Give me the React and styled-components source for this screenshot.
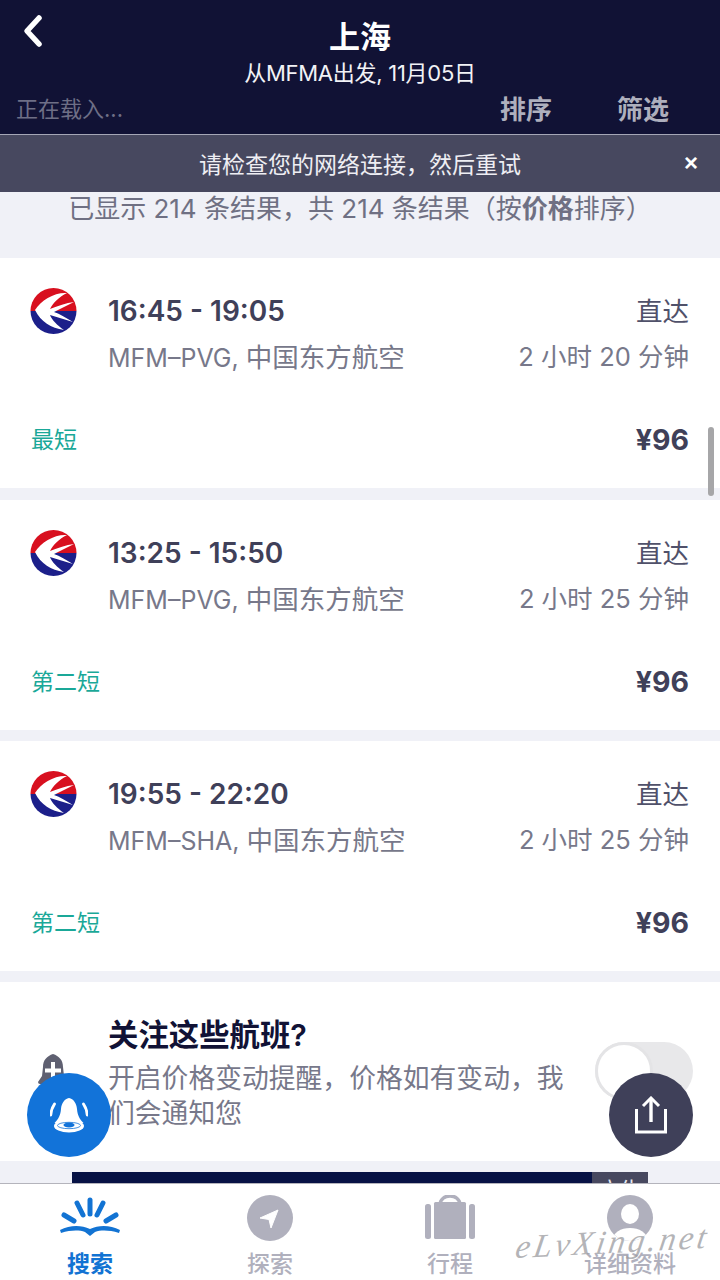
import React from "react";
import styled, { createGlobalStyle } from "styled-components";

const FONT = `Inter, "Noto Sans CJK SC", "Noto Sans", sans-serif`;

const Global = createGlobalStyle`
  html, body { margin: 0; padding: 0; background: #f0f1f7; }
  * { box-sizing: border-box; }
`;

const Page = styled.div`
  position: relative;
  width: 720px;
  height: 1280px;
  overflow: hidden;
  display: flex;
  flex-direction: column;
  font-family: ${FONT};
  background: #f0f1f7;
`;

const Header = styled.header`
  height: 135px;
  flex: none;
  background: #111235;
  border-bottom: 1px solid #a5a6b6;
  display: flex;
  flex-direction: column;
  align-items: center;
  position: relative;
`;

const Back = styled.button`
  position: absolute;
  left: 20px;
  top: 13px;
  width: 28px;
  height: 36px;
  padding: 0;
  border: 0;
  background: none;
  display: flex;
`;

const Title = styled.div`
  margin-top: 17px;
  height: 40px;
  line-height: 40px;
  font-size: 31px;
  font-weight: 600;
  color: #fff;
`;

const Subtitle = styled.div`
  height: 32px;
  line-height: 32px;
  font-size: 22px;
  color: #f2f2f6;
  letter-spacing: -0.27px;
`;

const Controls = styled.div`
  width: 100%;
  height: 40px;
  margin-top: -2px;
  padding: 0 51px 0 16px;
  display: flex;
  align-items: center;
`;

const Loading = styled.div`
  flex: 1;
  font-size: 22px;
  color: #6e6f86;
`;

const ControlAction = styled.div`
  font-size: 26px;
  font-weight: 600;
  color: #aeafbd;
  margin-left: 65px;
`;

const Banner = styled.div`
  height: 57px;
  flex: none;
  background: #47485f;
  display: flex;
  align-items: center;
  justify-content: center;
  position: relative;
  font-size: 23px;
  color: #eeeef3;
  padding-bottom: 2px;
`;

const Close = styled.span`
  position: absolute;
  right: 22px;
  top: 14px;
  font-size: 24px;
  font-weight: 700;
  color: #fff;
  font-family: "Liberation Sans", sans-serif;
`;

const Content = styled.main`
  flex: 1;
  min-height: 0;
  overflow: hidden;
  display: flex;
  flex-direction: column;
`;

const Summary = styled.div`
  height: 66px;
  flex: none;
  padding-top: 1px;
  line-height: 32px;
  text-align: center;
  font-size: 26px;
  color: #6f7083;
  b { font-weight: 700; }
`;

const Card = styled.article`
  flex: none;
  height: 230px;
  margin-bottom: ${(p) => p.$gap}px;
  background: #fff;
  padding: 30px 31px 0 30px;
  display: grid;
  grid-template-columns: 78px 1fr auto;
  grid-template-rows: 46px 46px 1fr;
`;

const LogoCell = styled.div`
  grid-row: 1 / span 2;
`;

const Time = styled.div`
  font-size: 28px;
  font-weight: 600;
  line-height: 46px;
  color: #3f4059;
`;

const Stops = styled.div`
  font-size: 26.5px;
  line-height: 46px;
  color: #50516a;
  text-align: right;
`;

const Route = styled.div`
  font-size: 25px;
  line-height: 46px;
  color: #77788a;
  white-space: nowrap;
`;

const Carrier = styled.span`
  font-size: 26.5px;
`;

const Duration = styled.div`
  font-size: 25.5px;
  line-height: 46px;
  color: #77788a;
  text-align: right;
  white-space: nowrap;
`;

const CardFoot = styled.div`
  grid-column: 1 / -1;
  display: flex;
  justify-content: space-between;
  align-items: center;
  height: 46px;
  margin-top: 35px;
  padding-left: 1px;
`;

const Tag = styled.div`
  font-size: 23px;
  color: #1aa898;
`;

const Price = styled.div`
  font-size: 28.5px;
  font-weight: 700;
  color: #3f4059;
  margin-top: 3px;
`;

const WatchCard = styled.section`
  flex: none;
  height: 179px;
  margin-bottom: 11px;
  background: #fff;
  padding: 32px 27px 0 38px;
  display: grid;
  grid-template-columns: 70px 1fr auto;
`;

const WatchIcon = styled.div`
  padding-top: 40px;
`;

const WatchText = styled.div`
  width: 470px;
`;

const WatchTitle = styled.div`
  font-size: 30.4px;
  font-weight: 600;
  line-height: 42px;
  color: #111235;
  white-space: nowrap;
`;

const WatchBody = styled.div`
  font-size: 26.8px;
  line-height: 35px;
  color: #77788a;
  margin-top: 5px;
`;

const Toggle = styled.div`
  width: 98px;
  height: 58px;
  margin-top: 28px;
  border-radius: 29px;
  background: #e8e8ea;
  position: relative;
`;

const Knob = styled.div`
  position: absolute;
  left: 0;
  top: 0;
  width: 58px;
  height: 58px;
  border-radius: 50%;
  background: #fff;
  border: 3px solid #e4e4e6;
`;

const AdRow = styled.div`
  flex: none;
  width: 576px;
  height: 80px;
  margin-left: 72px;
  background: #071245;
  display: flex;
  justify-content: flex-end;
`;

const AdBadge = styled.div`
  width: 56px;
  height: 40px;
  background: #47485f;
  color: #e8e8ee;
  font-size: 22px;
  line-height: 36px;
  text-align: center;
`;

const TabBar = styled.nav`
  height: 97px;
  flex: none;
  position: relative;
  z-index: 2;
  background: #fff;
  border-top: 1px solid #b4b4bc;
  display: grid;
  grid-template-columns: repeat(4, 180px);
`;

const Tab = styled.div`
  display: flex;
  flex-direction: column;
  align-items: center;
  color: ${(p) => (p.$active ? "#1273d3" : "#b0b0bd")};
  padding-top: 11px;
`;

const TabIcon = styled.div`
  height: 52px;
  display: flex;
  align-items: flex-start;
  justify-content: center;
`;

const TabLabel = styled.div`
  font-size: 23px;
  font-weight: ${(p) => (p.$active ? 700 : 500)};
  line-height: 32px;
  margin-top: 1px;
`;

const Fab = styled.button`
  position: absolute;
  top: 1073px;
  ${(p) => (p.$side === "left" ? "left: 27px;" : "left: 609px;")}
  z-index: 3;
  width: 84px;
  height: 84px;
  padding: 0;
  border: 0;
  border-radius: 50%;
  background: ${(p) => (p.$side === "left" ? "#1273d9" : "#3f4059")};
  display: flex;
  align-items: center;
  justify-content: center;
`;

const ScrollThumb = styled.div`
  position: absolute;
  left: 708px;
  top: 427px;
  width: 6px;
  height: 69px;
  border-radius: 3px;
  background: #a6a6a8;
  z-index: 3;
`;

const Watermark = styled.div`
  position: absolute;
  left: 516px;
  top: 1229px;
  z-index: 4;
  font-family: "Liberation Serif", serif;
  font-style: italic;
  font-size: 33px;
  letter-spacing: 3.2px;
  color: rgba(155, 155, 160, 0.75);
  transform: rotate(-3deg) skewX(-12deg);
  transform-origin: left center;
`;

const ChinaEastern = () => (
  <svg width="47" height="46" viewBox="0 0 47 46">
    <defs>
      <clipPath id="ce-c"><circle cx="23.5" cy="23" r="23" /></clipPath>
    </defs>
    <g clipPath="url(#ce-c)">
      <rect width="47" height="23" fill="#d8101f" />
      <rect y="23" width="47" height="23" fill="#1c1f8a" />
      <path d="M37 5 C25 4 11 12 5 22 C11 34 21 40 34 42 C27 37 22 32 20 27 L43 34 C36 30 30 26 24 24 L44 14 C36 15 28 18 20 21 C23 15 29 9 37 5 Z" fill="#fff" />
    </g>
  </svg>
);

const flights = [
  { time: "16:45 - 19:05", code: "MFM–PVG, ", dur: "2 小时 20 分钟", tag: "最短", gap: 12 },
  { time: "13:25 - 15:50", code: "MFM–PVG, ", dur: "2 小时 25 分钟", tag: "第二短", gap: 11 },
  { time: "19:55 - 22:20", code: "MFM–SHA, ", dur: "2 小时 25 分钟", tag: "第二短", gap: 11 },
];

export default function App() {
  return (
    <Page>
      <Global />
      <Header>
        <Back aria-label="返回">
          <svg width="26" height="36" viewBox="0 0 26 36">
            <path d="M19 5 L7 18 L19 31" fill="none" stroke="#fff" strokeWidth="5.5" strokeLinecap="round" strokeLinejoin="round" />
          </svg>
        </Back>
        <Title>上海</Title>
        <Subtitle>从MFMA出发, 11月05日</Subtitle>
        <Controls>
          <Loading>正在载入...</Loading>
          <ControlAction>排序</ControlAction>
          <ControlAction>筛选</ControlAction>
        </Controls>
      </Header>
      <Banner>
        请检查您的网络连接，然后重试
        <Close>×</Close>
      </Banner>
      <Content>
        <Summary>已显示 214 条结果，共 214 条结果（按<b>价格</b>排序）</Summary>
        {flights.map((f) => (
          <Card key={f.time} $gap={f.gap}>
            <LogoCell><ChinaEastern /></LogoCell>
            <Time>{f.time}</Time>
            <Stops>直达</Stops>
            <Route>{f.code}<Carrier>中国东方航空</Carrier></Route>
            <Duration>{f.dur}</Duration>
            <CardFoot>
              <Tag>{f.tag}</Tag>
              <Price>¥96</Price>
            </CardFoot>
          </Card>
        ))}
        <WatchCard>
          <WatchIcon>
            <svg width="30" height="34" viewBox="0 0 30 34">
              <path d="M15 0 C9 2 5 6 5 13 L4 22 L0 28 Q0 30 2 30 H28 Q30 30 30 28 L26 22 L25 13 C25 6 21 2 15 0 Z" fill="#5f6071" />
              <path d="M15 8 V25 M7 16.5 H23" stroke="#fff" strokeWidth="4" />
            </svg>
          </WatchIcon>
          <WatchText>
            <WatchTitle>关注这些航班?</WatchTitle>
            <WatchBody>开启价格变动提醒，价格如有变动，我们会通知您</WatchBody>
          </WatchText>
          <Toggle><Knob /></Toggle>
        </WatchCard>
        <AdRow><AdBadge>广告</AdBadge></AdRow>
      </Content>
      <TabBar>
        <Tab $active>
          <TabIcon>
            <svg width="62" height="42" viewBox="0 0 62 42" style={{ marginTop: 2 }}>
              <g stroke="#1273d3" strokeWidth="5" strokeLinecap="round" fill="none">
                <path d="M31 3 V17" />
                <path d="M18 6 L24 18" />
                <path d="M44 6 L38 18" />
                <path d="M5 18 L15 24" />
                <path d="M57 18 L47 24" />
              </g>
              <path d="M1 33 C11 28 22 28 31 32 C40 28 51 28 61 33 L60 36 C50 33 42 33 36 35 L31 39 L26 35 C20 33 12 33 2 36 Z" fill="#1273d3" />
            </svg>
          </TabIcon>
          <TabLabel $active>搜索</TabLabel>
        </Tab>
        <Tab>
          <TabIcon>
            <svg width="46" height="46" viewBox="0 0 46 46">
              <circle cx="23" cy="23" r="23" fill="#b0b0bd" />
              <path d="M31 15 L13 23 L22 24.5 L24 33 Z" fill="#fff" stroke="#fff" strokeWidth="1" strokeLinejoin="round" />
            </svg>
          </TabIcon>
          <TabLabel>探索</TabLabel>
        </Tab>
        <Tab>
          <TabIcon>
            <svg width="50" height="46" viewBox="0 1 50 46">
              <path d="M15 11 C15 -1 35 -1 35 11" fill="none" stroke="#b0b0bd" strokeWidth="3.5" />
              <rect x="0" y="10" width="6" height="35" rx="2.5" fill="#b0b0bd" />
              <rect x="9" y="8" width="32" height="37" rx="1.5" fill="#b0b0bd" />
              <rect x="44" y="10" width="6" height="35" rx="2.5" fill="#b0b0bd" />
            </svg>
          </TabIcon>
          <TabLabel>行程</TabLabel>
        </Tab>
        <Tab>
          <TabIcon>
            <svg width="46" height="46" viewBox="0 0 46 46">
              <defs>
                <clipPath id="pf-c"><circle cx="23" cy="23" r="23" /></clipPath>
              </defs>
              <circle cx="23" cy="23" r="23" fill="#b0b0bd" />
              <g clipPath="url(#pf-c)">
                <ellipse cx="23" cy="19" rx="9" ry="10" fill="#fff" />
                <ellipse cx="23" cy="44" rx="17" ry="11" fill="#fff" />
              </g>
            </svg>
          </TabIcon>
          <TabLabel>详细资料</TabLabel>
        </Tab>
      </TabBar>
      <Fab $side="left" aria-label="提醒">
        <svg width="38" height="35" viewBox="0 0 38 35">
          <path d="M19 0 C14.5 1 11.5 5 11 11 C10.5 17 8.5 21 4.5 25 H33.5 C29.5 21 27.5 17 27 11 C26.5 5 23.5 1 19 0 Z" fill="#fff" />
          <ellipse cx="19" cy="28" rx="15" ry="6.5" fill="#fff" />
          <ellipse cx="19" cy="27.5" rx="11.5" ry="3.2" fill="#fff" stroke="#1273d9" strokeWidth="0.8" />
          <ellipse cx="19" cy="27" rx="5.5" ry="2.4" fill="#1273d9" />
          <path d="M4.5 6 C2.5 9 1 13 0.8 17" fill="none" stroke="#fff" strokeWidth="2.8" strokeLinecap="round" />
          <path d="M33.5 6 C35.5 9 37 13 37.2 17" fill="none" stroke="#fff" strokeWidth="2.8" strokeLinecap="round" />
        </svg>
      </Fab>
      <Fab $side="right" aria-label="分享">
        <svg width="32" height="38" viewBox="0 0 32 38">
          <path d="M1.5 13 V36 H30.5 V13" fill="none" stroke="#fff" strokeWidth="3" />
          <path d="M16 26 V3" stroke="#fff" strokeWidth="3.4" />
          <path d="M8 10 L16 2 L24 10" fill="none" stroke="#fff" strokeWidth="3" />
        </svg>
      </Fab>
      <ScrollThumb />
      <Watermark>eLvXing.net</Watermark>
    </Page>
  );
}
